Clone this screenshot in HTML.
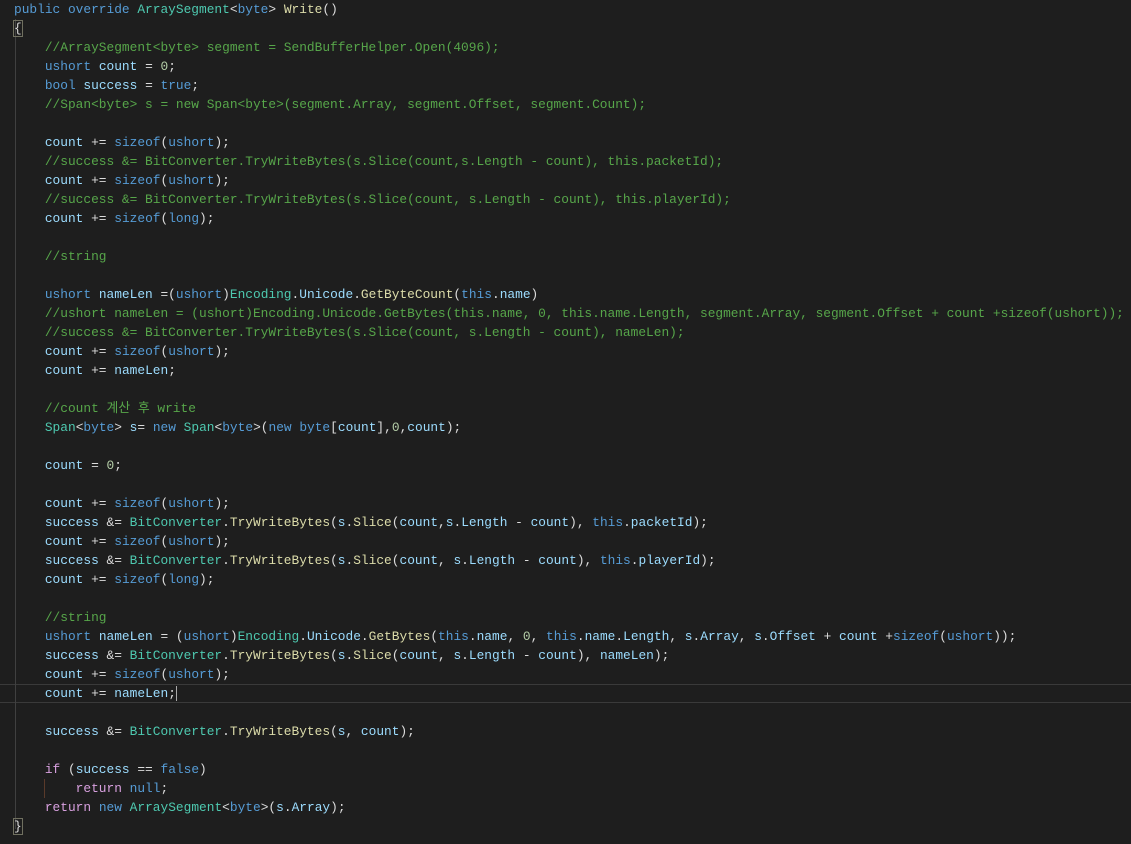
<!DOCTYPE html>
<html><head><meta charset="utf-8"><style>
html,body{margin:0;padding:0;background:#1e1e1e;width:1131px;height:844px;overflow:hidden}
#c{position:absolute;left:14px;top:0;font-family:"Liberation Mono","Noto Sans CJK KR",monospace;font-size:12.85px;color:#dcdcdc}
.l{height:19px;line-height:19px;white-space:pre}
.k{color:#569cd6}.t{color:#4ec9b0}.m{color:#dcdcaa}.v{color:#9cdcfe}.n{color:#b5cea8}.c{color:#57a64a}.x{color:#d8a0df}
.hl{position:absolute;left:0;top:684px;width:1131px;height:17px;border-top:1px solid #3a3a3a;border-bottom:1px solid #3a3a3a}
.g{position:absolute;left:15px;top:19px;width:1px;height:810px;background:#404040}
.g2{position:absolute;left:44px;top:779px;width:1px;height:19px;background:#5a3a2a}
.b{outline:1px solid #707060}
</style></head><body>
<div class="hl"></div><div class="g"></div><div class="g2"></div>
<div id="c">
<div class="l"><span class="k">public override</span> <span class="t">ArraySegment</span>&lt;<span class="k">byte</span>&gt; <span class="m">Write</span>()</div>
<div class="l"><span class="b">{</span></div>
<div class="l">    <span class="c">//ArraySegment&lt;byte&gt; segment = SendBufferHelper.Open(4096);</span></div>
<div class="l">    <span class="k">ushort</span> <span class="v">count</span> = <span class="n">0</span>;</div>
<div class="l">    <span class="k">bool</span> <span class="v">success</span> = <span class="k">true</span>;</div>
<div class="l">    <span class="c">//Span&lt;byte&gt; s = new Span&lt;byte&gt;(segment.Array, segment.Offset, segment.Count);</span></div>
<div class="l"> </div>
<div class="l">    <span class="v">count</span> += <span class="k">sizeof</span>(<span class="k">ushort</span>);</div>
<div class="l">    <span class="c">//success &amp;= BitConverter.TryWriteBytes(s.Slice(count,s.Length - count), this.packetId);</span></div>
<div class="l">    <span class="v">count</span> += <span class="k">sizeof</span>(<span class="k">ushort</span>);</div>
<div class="l">    <span class="c">//success &amp;= BitConverter.TryWriteBytes(s.Slice(count, s.Length - count), this.playerId);</span></div>
<div class="l">    <span class="v">count</span> += <span class="k">sizeof</span>(<span class="k">long</span>);</div>
<div class="l"> </div>
<div class="l">    <span class="c">//string</span></div>
<div class="l"> </div>
<div class="l">    <span class="k">ushort</span> <span class="v">nameLen</span> =(<span class="k">ushort</span>)<span class="t">Encoding</span>.<span class="v">Unicode</span>.<span class="m">GetByteCount</span>(<span class="k">this</span>.<span class="v">name</span>)</div>
<div class="l">    <span class="c">//ushort nameLen = (ushort)Encoding.Unicode.GetBytes(this.name, 0, this.name.Length, segment.Array, segment.Offset + count +sizeof(ushort));</span></div>
<div class="l">    <span class="c">//success &amp;= BitConverter.TryWriteBytes(s.Slice(count, s.Length - count), nameLen);</span></div>
<div class="l">    <span class="v">count</span> += <span class="k">sizeof</span>(<span class="k">ushort</span>);</div>
<div class="l">    <span class="v">count</span> += <span class="v">nameLen</span>;</div>
<div class="l"> </div>
<div class="l">    <span class="c">//count 계산 후 write</span></div>
<div class="l">    <span class="t">Span</span>&lt;<span class="k">byte</span>&gt; <span class="v">s</span>= <span class="k">new</span> <span class="t">Span</span>&lt;<span class="k">byte</span>&gt;(<span class="k">new byte</span>[<span class="v">count</span>],<span class="n">0</span>,<span class="v">count</span>);</div>
<div class="l"> </div>
<div class="l">    <span class="v">count</span> = <span class="n">0</span>;</div>
<div class="l"> </div>
<div class="l">    <span class="v">count</span> += <span class="k">sizeof</span>(<span class="k">ushort</span>);</div>
<div class="l">    <span class="v">success</span> &amp;= <span class="t">BitConverter</span>.<span class="m">TryWriteBytes</span>(<span class="v">s</span>.<span class="m">Slice</span>(<span class="v">count</span>,<span class="v">s</span>.<span class="v">Length</span> - <span class="v">count</span>), <span class="k">this</span>.<span class="v">packetId</span>);</div>
<div class="l">    <span class="v">count</span> += <span class="k">sizeof</span>(<span class="k">ushort</span>);</div>
<div class="l">    <span class="v">success</span> &amp;= <span class="t">BitConverter</span>.<span class="m">TryWriteBytes</span>(<span class="v">s</span>.<span class="m">Slice</span>(<span class="v">count</span>, <span class="v">s</span>.<span class="v">Length</span> - <span class="v">count</span>), <span class="k">this</span>.<span class="v">playerId</span>);</div>
<div class="l">    <span class="v">count</span> += <span class="k">sizeof</span>(<span class="k">long</span>);</div>
<div class="l"> </div>
<div class="l">    <span class="c">//string</span></div>
<div class="l">    <span class="k">ushort</span> <span class="v">nameLen</span> = (<span class="k">ushort</span>)<span class="t">Encoding</span>.<span class="v">Unicode</span>.<span class="m">GetBytes</span>(<span class="k">this</span>.<span class="v">name</span>, <span class="n">0</span>, <span class="k">this</span>.<span class="v">name</span>.<span class="v">Length</span>, <span class="v">s</span>.<span class="v">Array</span>, <span class="v">s</span>.<span class="v">Offset</span> + <span class="v">count</span> +<span class="k">sizeof</span>(<span class="k">ushort</span>));</div>
<div class="l">    <span class="v">success</span> &amp;= <span class="t">BitConverter</span>.<span class="m">TryWriteBytes</span>(<span class="v">s</span>.<span class="m">Slice</span>(<span class="v">count</span>, <span class="v">s</span>.<span class="v">Length</span> - <span class="v">count</span>), <span class="v">nameLen</span>);</div>
<div class="l">    <span class="v">count</span> += <span class="k">sizeof</span>(<span class="k">ushort</span>);</div>
<div class="l">    <span class="v">count</span> += <span class="v">nameLen</span>;<span style="border-left:1px solid #aaa"></span></div>
<div class="l"> </div>
<div class="l">    <span class="v">success</span> &amp;= <span class="t">BitConverter</span>.<span class="m">TryWriteBytes</span>(<span class="v">s</span>, <span class="v">count</span>);</div>
<div class="l"> </div>
<div class="l">    <span class="x">if</span> (<span class="v">success</span> == <span class="k">false</span>)</div>
<div class="l">        <span class="x">return</span> <span class="k">null</span>;</div>
<div class="l">    <span class="x">return</span> <span class="k">new</span> <span class="t">ArraySegment</span>&lt;<span class="k">byte</span>&gt;(<span class="v">s</span>.<span class="v">Array</span>);</div>
<div class="l"><span class="b">}</span></div>
</div>
</body></html>
